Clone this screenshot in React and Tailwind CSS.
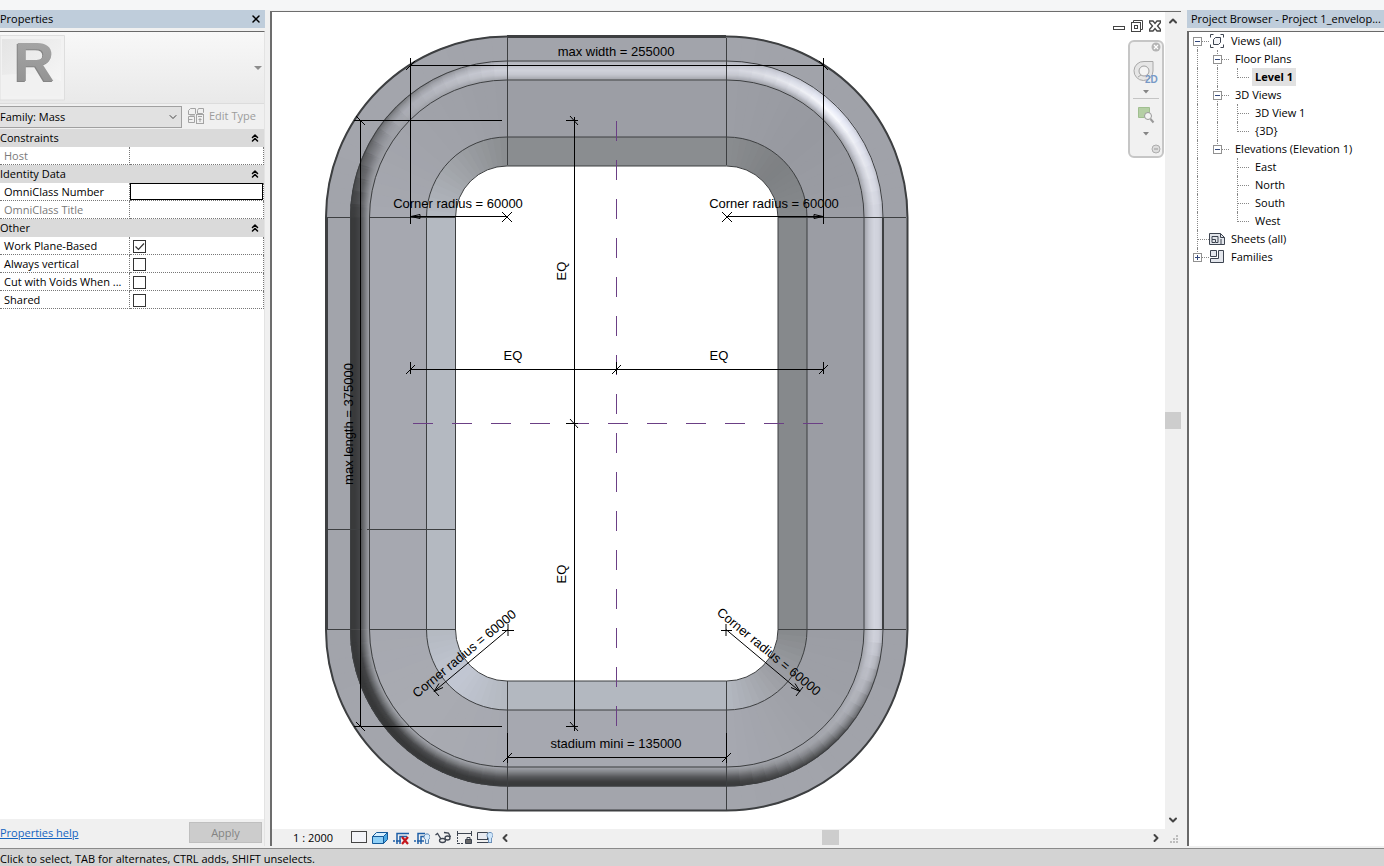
import React from "react";
import {
  ChevronDown,
  ChevronLeft,
  ChevronRight,
  ChevronUp,
  ChevronsUp,
  X,
} from "lucide-react";

/* ---------- data ---------- */

const propertyGroups = [
  {
    title: "Constraints",
    rows: [{ id: "host", label: "Host", type: "text", disabled: true }],
  },
  {
    title: "Identity Data",
    rows: [
      { id: "omni-number", label: "OmniClass Number", type: "text" },
      { id: "omni-title", label: "OmniClass Title", type: "text", disabled: true },
    ],
  },
  {
    title: "Other",
    rows: [
      { id: "work-plane", label: "Work Plane-Based", type: "check", checked: true },
      { id: "always-vertical", label: "Always vertical", type: "check" },
      { id: "cut-voids", label: "Cut with Voids When ...", type: "check" },
      { id: "shared", label: "Shared", type: "check" },
    ],
  },
];

// guides: one entry per tree column ("line", "blank", "tee", "end")
const treeRows = [
  { label: "Views (all)", guides: ["first"], toggle: "-", icon: "views" },
  { label: "Floor Plans", guides: ["line", "tee"], toggle: "-" },
  { label: "Level 1", guides: ["line", "line", "end"], selected: true },
  { label: "3D Views", guides: ["line", "tee"], toggle: "-" },
  { label: "3D View 1", guides: ["line", "line", "tee"] },
  { label: "{3D}", guides: ["line", "line", "end"] },
  { label: "Elevations (Elevation 1)", guides: ["line", "end"], toggle: "-" },
  { label: "East", guides: ["line", "blank", "tee"] },
  { label: "North", guides: ["line", "blank", "tee"] },
  { label: "South", guides: ["line", "blank", "tee"] },
  { label: "West", guides: ["line", "blank", "end"] },
  { label: "Sheets (all)", guides: ["tee"], icon: "sheets" },
  { label: "Families", guides: ["end"], toggle: "+", icon: "families" },
];

/* ---------- stadium model ---------- */

const CX = [507, 726.5];
const CY = [217.5, 629.5];

// colour stops by compass direction, E first and counter-clockwise
const TUBE = [
  [[176, 178, 187], [207, 209, 219], [211, 213, 223], [195, 197, 206], [163, 165, 172]],
  [[205, 208, 220], [232, 235, 248], [250, 251, 255], [212, 214, 224], [160, 162, 169]],
  [[168, 170, 178], [192, 194, 203], [208, 210, 219], [197, 199, 207], [163, 165, 172]],
  [[112, 114, 118], [148, 150, 156], [168, 170, 178], [168, 170, 177], [160, 162, 169]],
  [[56, 57, 58], [57, 58, 59], [66, 67, 69], [112, 114, 118], [158, 160, 166]],
  [[56, 57, 58], [56, 57, 58], [70, 71, 73], [120, 122, 126], [164, 166, 173]],
  [[56, 57, 58], [60, 61, 62], [86, 87, 90], [128, 130, 134], [162, 164, 171]],
  [[64, 65, 67], [112, 114, 118], [150, 152, 158], [168, 170, 177], [164, 166, 173]],
];
const SLOPE = [
  [[134, 137, 140]],
  [[126, 128, 131]],
  [[138, 141, 144]],
  [[160, 163, 168]],
  [[180, 185, 193]],
  [[194, 199, 211]],
  [[179, 184, 192]],
  [[158, 160, 166]],
];
const DECK = [
  [[155, 157, 164]],
  [[151, 153, 160]],
  [[156, 158, 165]],
  [[161, 163, 170]],
  [[166, 168, 176]],
  [[169, 171, 178]],
  [[166, 168, 176]],
  [[159, 161, 168]],
];
const RIM = [
  [[160, 162, 169]],
  [[160, 162, 169]],
  [[162, 164, 171]],
  [[163, 165, 172]],
  [[162, 164, 171]],
  [[163, 165, 172]],
  [[163, 165, 172]],
  [[161, 163, 170]],
];

const mix = (a, b, f) => a.map((v, i) => v + (b[i] - v) * f);

const shade = (table, deg, t) => {
  const pick = (stops) => {
    if (stops.length === 1) return stops[0];
    const p = t * (stops.length - 1);
    const i = Math.min(Math.floor(p), stops.length - 2);
    return mix(stops[i], stops[i + 1], p - i);
  };
  const k = (deg % 360) / 45;
  const i = Math.floor(k);
  const c = mix(pick(table[i]), pick(table[(i + 1) % 8]), k - i);
  return `rgb(${c.map(Math.round).join(",")})`;
};

const point = (cx, cy, r, deg) => {
  const a = (deg * Math.PI) / 180;
  return `${(cx + r * Math.cos(a)).toFixed(2)} ${(cy - r * Math.sin(a)).toFixed(2)}`;
};

const STEPS = 18;

// every segment runs a little under the next one, so no seam shows
const Ring = ({ table, outer, inner, bands = 1 }) => {
  const w = (outer - inner) / bands;
  const parts = [];
  for (let b = 0; b < bands; b++) {
    const r = outer - w * (b + 0.5);
    const t = (b + 0.5) / bands;
    const sw = w + 1;
    [
      [1, 0, 0],
      [0, 0, 90],
      [0, 1, 180],
      [1, 1, 270],
    ].forEach(([ix, iy, from]) => {
      for (let s = 0; s < STEPS; s++) {
        const d0 = from + (90 / STEPS) * s;
        const d1 = d0 + 90 / STEPS;
        parts.push(
          <path
            key={`${b}-${d0}`}
            d={`M${point(CX[ix], CY[iy], r, d0)}A${r} ${r} 0 0 0 ${point(CX[ix], CY[iy], r, d1 + 1)}`}
            stroke={shade(table, (d0 + d1) / 2, t)}
            strokeWidth={sw}
          />
        );
      }
    });
    parts.push(
      <g key={`s-${b}`} strokeWidth={sw}>
        <path d={`M${CX[1] + r} ${CY[0]}V${CY[1]}`} stroke={shade(table, 0, t)} />
        <path d={`M${CX[0]} ${CY[0] - r}H${CX[1]}`} stroke={shade(table, 90, t)} />
        <path d={`M${CX[0] - r} ${CY[0]}V${CY[1]}`} stroke={shade(table, 180, t)} />
        <path d={`M${CX[0]} ${CY[1] + r}H${CX[1]}`} stroke={shade(table, 270, t)} />
      </g>
    );
  }
  return <g fill="none">{parts}</g>;
};

const Outline = ({ r, width = 1 }) => (
  <rect
    x={CX[0] - r}
    y={CY[0] - r}
    width={CX[1] - CX[0] + 2 * r}
    height={CY[1] - CY[0] + 2 * r}
    rx={r}
    fill="none"
    stroke="#3d3f41"
    strokeWidth={width}
  />
);

const StadiumModel = () => (
  <svg viewBox="272 12 893 817" className="block h-full w-full" role="img" aria-label="Level 1 plan">
    <Ring table={RIM} outer={181} inner={156} />
    <Ring table={DECK} outer={138} inner={80} />
    <Ring table={SLOPE} outer={80} inner={52} />
    <Ring table={TUBE} outer={156.5} inner={137.5} bands={19} />
    <Outline r={181} width={2} />
    <Outline r={156.5} />
    <Outline r={137.5} />
    <Outline r={80.5} />
    <Outline r={51.5} />

    <g fill="none" stroke="#3d3f41">
      <path strokeWidth="3" d="M507 36.500H726M326.500 217V630" />
      <path d="M507.500 38V165M726.500 38V165M507.500 681V810M726.500 681V810" />
      <path d="M328 217.500H351M369 217.500H456M778 217.500H906M328 629.500H351M369 629.500H456M778 629.500H906M328 529.500H362M367 529.500H456" />
      <path strokeWidth="2" d="M883 217V630" />
    </g>

    {/* reference planes */}
    <g stroke="#6b3f85" strokeDasharray="20 19">
      <path d="M616.500 121V726" />
      <path d="M413 423.500H824" />
    </g>

    {/* dimensions */}
    <g fill="none" stroke="#000">
      <path d="M410.500 65.500H824M410.500 58V224M823.500 58V224M406 70l9 -9M819 61l9 9" />
      <path d="M360.500 120V727M354 120.500H502M354 726.500H502M356 116l9 9M356 722l9 9" />
      <path d="M574.500 117V731M566 120.500H578M566 423.500H578M566 726.500H578M570 116l8 9M570 419l8 9M570 722l8 9" />
      <path d="M410 369.500H824M410.500 362V374M616.500 362V374M823.500 362V374M406 374l9 -9M612 374l9 -9M819 374l9 -9" />
      <path d="M411 216.500H507M411 216.500l9 -2v4zM502 212l10 10M512 212l-10 10" />
      <path d="M727 216.500H823M823 216.500l-9 -2v4zM722 212l10 10M732 212l-10 10" />
      <path d="M507 757.500H727M507.500 733V763M726.500 733V763M503 762l9 -9M722 762l9 -9" />
      <path d="M508 629.500L434 691.500M434 691.500l9 -4M434 691.500l5 -8M431 687l8 9M502 630.500H514M508 624V636" />
      <path d="M726 629.500L800 691.500M800 691.500l-9 -4M800 691.500l-5 -8M803 687l-7 9M721 630.500H732M726 624V636" />
    </g>
    <g fontFamily="Liberation Sans, Arial, sans-serif" fontSize="13" textAnchor="middle" fill="#000">
      <text x="616" y="56">max width = 255000</text>
      <text x="458" y="208">Corner radius = 60000</text>
      <text x="774" y="208">Corner radius = 60000</text>
      <text x="513" y="360">EQ</text>
      <text x="719" y="360">EQ</text>
      <text x="616" y="748">stadium mini = 135000</text>
      <text transform="translate(353 424) rotate(-90)">max length = 375000</text>
      <text transform="translate(566 271) rotate(-90)">EQ</text>
      <text transform="translate(566 574) rotate(-90)">EQ</text>
      <text transform="translate(467 657) rotate(-39.500)">Corner radius = 60000</text>
      <text transform="translate(766 655) rotate(39.500)">Corner radius = 60000</text>
    </g>
  </svg>
);

/* ---------- properties palette ---------- */

const RevitLogo = () => (
  <svg viewBox="0 0 66 66" className="h-[66px] w-[66px] overflow-visible" aria-hidden="true">
    <defs>
      <linearGradient id="tile" x1="0" y1="0" x2="1" y2="1">
        <stop offset="0" stopColor="#e4e4e4" />
        <stop offset="1" stopColor="#f8f8f8" />
      </linearGradient>
      <linearGradient id="logo" x1="0" y1="0" x2="0" y2="1">
        <stop offset="0" stopColor="#a9a9a9" />
        <stop offset="1" stopColor="#8f8f8f" />
      </linearGradient>
    </defs>
    <path d="M0 .5H64.500V65H0z" fill="#f2f2f2" stroke="#dedede" />
    <path d="M2 4H61V61H2z" fill="url(#tile)" />
    <path d="M2 40C22 38 44 38 61 46V61H2z" fill="#f1f1f1" />
    <g fontFamily="Liberation Sans, Arial, sans-serif" fontWeight="700" fontSize="56">
      <text x="13" y="47" fill="#858585">R</text>
      <text x="14" y="46" fill="url(#logo)">R</text>
    </g>
  </svg>
);

const EditTypeIcon = () => (
  <svg viewBox="0 0 17 17" className="h-[17px] w-[17px]" fill="none" stroke="#a3a3a3" aria-hidden="true">
    <path d="M.5 3.500l2-2h5v5l-1 1h-6zM9.500 3.500l1-2h5v4l-1 1h-5zM.5 9.500h6v6h-6zM.5 12.500h4M2 8h5" />
    <rect x="8.500" y="7.500" width="7" height="9" fill="#f0f0f0" />
    <path d="M10 9.500h4M10.500 12.500h3M12 11v4" />
  </svg>
);

const CheckBox = ({ id, defaultChecked }) => (
  <span className="relative ml-[3px] mt-0.5 block h-[13px] w-[13px]">
    <input
      id={id}
      type="checkbox"
      defaultChecked={defaultChecked}
      className="peer block h-[13px] w-[13px] appearance-none border border-[#333] bg-white"
    />
    <svg
      viewBox="0 0 13 13"
      className="pointer-events-none absolute inset-0 hidden peer-checked:block"
      fill="none"
      stroke="#333"
      strokeWidth="1.200"
    >
      <path d="M2.500 6.500l3 3 5.500-6" />
    </svg>
  </span>
);

const PropertyTable = () => (
  <table className="w-full table-fixed border-separate border-spacing-0">
    <colgroup>
      <col className="w-[130px]" />
      <col />
    </colgroup>
    {propertyGroups.map((group) => (
      <tbody key={group.title}>
        <tr>
          <th colSpan={2} className="h-[18px] bg-[#dadada] p-0 text-left font-normal">
            <span className="flex items-center justify-between pr-[3px]">
              {group.title}
              <ChevronsUp size={12} strokeWidth={3} />
            </span>
          </th>
        </tr>
        {group.rows.map((row) => (
          <tr key={row.id} className={row.disabled ? "text-[#7a7a7a]" : "text-black"}>
            <td className="h-[18px] border-r border-b border-dotted border-[#777] p-0 pl-1">
              <label htmlFor={row.id} className="block h-[17px] leading-[17px] whitespace-nowrap">
                {row.label}
              </label>
            </td>
            <td className="h-[18px] border-r border-b border-dotted border-[#777] p-0">
              {row.type === "check" ? (
                <CheckBox id={row.id} defaultChecked={row.checked} />
              ) : (
                <input
                  id={row.id}
                  type="text"
                  disabled={row.disabled}
                  className="block h-[17px] w-full border border-black bg-white px-1 outline-none disabled:border-transparent"
                />
              )}
            </td>
          </tr>
        ))}
      </tbody>
    ))}
  </table>
);

const PropertiesPanel = () => (
  <aside className="flex w-[265px] shrink-0 flex-col">
    <header className="flex h-[18px] items-center justify-between bg-[#bfcddb] pr-[3px]">
      <h2>Properties</h2>
      <button type="button" aria-label="Close properties">
        <X size={12} strokeWidth={3} />
      </button>
    </header>
    <div className="mt-[3px] flex min-h-0 flex-1 flex-col border-t border-r border-t-[#696969] border-r-[#e3e3e3]">
      <div className="flex h-[72px] items-center justify-between border-b border-[#dcdcdc] bg-linear-to-b from-[#f8f8f8] to-[#e9e9e9] pr-0.5">
        <RevitLogo />
        <button type="button" aria-label="Type selector">
          <svg viewBox="0 0 8 4" className="h-1 w-2">
            <path d="M0 0h8l-4 4z" fill="#8d8d8d" />
          </svg>
        </button>
      </div>
      <div className="flex h-[25px] items-center">
        <div className="relative">
          <select
            aria-label="Family"
            className="block h-[22px] w-[182px] appearance-none border border-l-0 border-[#a0a0a0] bg-[#e1e1e1]"
          >
            <option>Family: Mass</option>
          </select>
          <ChevronDown size={12} className="pointer-events-none absolute top-[5px] right-[3px] text-[#444]" />
        </div>
        <button type="button" disabled className="ml-1.5 flex items-center gap-1 pb-0.5 text-[#9c9c9c]">
          <EditTypeIcon />
          Edit Type
        </button>
      </div>
      <div className="flex-1 bg-white">
        <PropertyTable />
      </div>
      <footer className="flex h-[27px] items-center justify-between pr-0.5">
        <a href="#help" className="text-[#1464c0] underline">
          Properties help
        </a>
        <button
          type="button"
          disabled
          className="h-[21px] w-[73px] border border-[#bfbfbf] bg-[#ccc] text-[#838383]"
        >
          Apply
        </button>
      </footer>
    </div>
  </aside>
);

/* ---------- drawing view ---------- */

const WindowControls = () => (
  <div className="absolute top-2 right-1 flex items-center gap-1.5 text-[#444]">
    <button type="button" aria-label="Minimize">
      <svg viewBox="0 0 12 12" className="h-3 w-3" fill="#fff" stroke="currentColor">
        <rect x=".5" y="6.500" width="11" height="3" />
      </svg>
    </button>
    <button type="button" aria-label="Restore">
      <svg viewBox="0 0 12 12" className="h-3 w-3" fill="none" stroke="currentColor">
        <path d="M2.500 2V.5h9v9H10" />
        <rect x=".5" y="2.500" width="9" height="9" />
        <rect x="3.500" y="5.500" width="3" height="3" />
      </svg>
    </button>
    <button type="button" aria-label="Close view">
      <svg viewBox="0 0 12 12" className="h-3 w-3" fill="#fff" stroke="currentColor" strokeWidth="1.300">
        <path d="M.5 1h3.500l2 2.500L8 1h3.500v1.500L8.500 6l3 3.500V11H8L6 8.500 4 11H.5V9.500l3-3.500-3-3.500z" />
      </svg>
    </button>
  </div>
);

const NavigationBar = () => (
  <div className="absolute top-7 right-px flex h-[118px] w-9 flex-col items-center rounded-md border-2 border-[#c6c6c6] bg-[#f1f1f1]">
    <button type="button" aria-label="Close navigation bar" className="mr-px self-end">
      <svg viewBox="0 0 10 10" className="h-[10px] w-[10px]">
        <circle cx="5" cy="5" r="4.500" fill="#b5b5b5" />
        <path d="M3 3l4 4M7 3l-4 4" stroke="#fff" strokeWidth="1.200" />
      </svg>
    </button>
    <button type="button" aria-label="Steering wheel" className="mt-2">
      <svg viewBox="0 0 26 26" className="h-[26px] w-[26px] overflow-visible" fill="none">
        <path d="M11 1.500h9v9.500a9.500 9.500 0 1 1-9-9.500z" fill="#e6e6e6" stroke="#a8a8a8" />
        <circle cx="11" cy="11" r="5" fill="#f4f4f4" stroke="#a0a0a0" />
        <path d="M5 17l3-2M14 14l3 3" stroke="#a8a8a8" />
        <text x="12" y="23" fontFamily="Liberation Sans, Arial, sans-serif" fontWeight="700" fontSize="10" fill="#7799c6">
          2D
        </text>
      </svg>
    </button>
    <svg viewBox="0 0 6 4" className="mt-1 h-1 w-1.5">
      <path d="M0 0h6L3 3.500z" fill="#858585" />
    </svg>
    <hr className="mt-1 w-[26px] border-[#c4c4c4]" />
    <button type="button" aria-label="Zoom" className="mt-[7px]">
      <svg viewBox="0 0 18 18" className="h-[18px] w-[18px]" fill="none">
        <path d="M1.500 1.500h11v10h-11z" fill="#b5cfa5" stroke="#a0bf90" />
        <circle cx="11" cy="10" r="3.500" fill="#f4f4f4" stroke="#9a9a9a" />
        <path d="M13.500 13l3 3.500" stroke="#9a9a9a" strokeWidth="2" />
      </svg>
    </button>
    <svg viewBox="0 0 6 4" className="mt-2 h-1 w-1.5">
      <path d="M0 0h6L3 3.500z" fill="#858585" />
    </svg>
    <svg viewBox="0 0 10 10" className="mt-auto mr-px mb-0.5 h-[10px] w-[10px] self-end">
      <circle cx="5" cy="5" r="4" fill="#ddd" stroke="#adadad" />
      <path d="M3 5h4" stroke="#999" />
    </svg>
  </div>
);

const viewTools = [
  {
    name: "Detail level",
    art: <rect x=".5" y="1.500" width="15" height="11" fill="#f3f4f8" stroke="#444" />,
  },
  {
    name: "Visual style",
    art: (
      <>
        <path d="M.5 6.500l4-4h11l-4 4z" fill="#d5efff" stroke="#155a99" />
        <path d="M.5 6.500h11v7H.5z" fill="#8fd0f7" stroke="#155a99" />
        <path d="M11.500 6.500l4-4v7l-4 4z" fill="#4ca9e4" stroke="#155a99" />
      </>
    ),
  },
  {
    name: "Crop view off",
    art: (
      <>
        <path d="M0 11h2M4 14V3.500H16M7 14V6.500H14M3 11h5" stroke="#1f5fa6" strokeWidth="1.500" />
        <path d="M9 7l6 7M15 7l-6 7" stroke="#c4161c" strokeWidth="2.200" />
      </>
    ),
  },
  {
    name: "Show crop region",
    art: (
      <>
        <path d="M0 11h2M4 14V3.500H11M7 14V6.500H10M3 11h7" stroke="#1f5fa6" strokeWidth="1.500" />
        <path d="M11.500 9.500a3 3 0 1 1 3 0v4h-3z" fill="#d9ecfb" stroke="#5a86b5" />
      </>
    ),
  },
  {
    name: "Temporary hide",
    art: (
      <g stroke="#3d4450" strokeWidth="1.300">
        <path d="M.5 5l2-1.500L6 9M9 2.500L13.500 3l2 4" />
        <ellipse cx="7.500" cy="10.500" rx="3" ry="2" />
        <ellipse cx="12.500" cy="8" rx="2.500" ry="2" />
      </g>
    ),
  },
  {
    name: "Temporary view properties",
    art: (
      <g stroke="#3d4450">
        <path d="M1.500 1v5M15.500 1v5M1 3.500h15" />
        <path d="M1.500 7v7M2 13.500h6" strokeDasharray="2 1" />
        <path d="M9.500 9.500h6v4h-6z" fill="#666" />
        <path d="M11 9V7.500h3V9" />
      </g>
    ),
  },
  {
    name: "Reveal hidden",
    art: (
      <>
        <path d="M.5 2.500h10v7H.5z" fill="#e8eaf0" stroke="#3d4450" />
        <path d="M0 9.500h11M0 12.500h15" stroke="#3d4450" />
        <path d="M11.500 8a3 3 0 1 1 3 0v4.500h-3z" fill="#cfe6fa" stroke="#6d93bd" />
      </>
    ),
  },
];

const ViewControlBar = () => (
  <div className="flex h-[17px] items-center bg-[#f0f0f0] pl-[21px]">
    <button type="button" className="mr-[18px] whitespace-nowrap">
      1 : 2000
    </button>
    <div className="flex gap-[5px]">
      {viewTools.map((tool) => (
        <button key={tool.name} type="button" aria-label={tool.name}>
          <svg viewBox="0 0 16 16" className="h-4 w-4" fill="none">
            {tool.art}
          </svg>
        </button>
      ))}
    </div>
    <button type="button" aria-label="Scroll left" className="ml-1.5 text-[#444]">
      <ChevronLeft size={12} strokeWidth={4} />
    </button>
    <div className="flex h-full flex-1 items-center justify-center">
      <span className="h-[15px] w-[17px] bg-[#cdcdcd]" />
    </div>
    <button type="button" aria-label="Scroll right" className="mr-[3px] text-[#444]">
      <ChevronRight size={12} strokeWidth={4} />
    </button>
  </div>
);

const DrawingView = () => (
  <main className="mt-px ml-[5px] flex min-w-0 flex-1 border-t border-l-2 border-[#6d6d6d] bg-white">
    <div className="flex min-w-0 flex-1 flex-col">
      <div className="relative min-h-0 flex-1">
        <StadiumModel />
        <WindowControls />
        <NavigationBar />
      </div>
      <ViewControlBar />
    </div>
    <div className="flex w-4 shrink-0 flex-col items-center bg-[#f0f0f0] text-[#444]">
      <button type="button" aria-label="Scroll up" className="mt-[3px]">
        <ChevronUp size={12} strokeWidth={4} />
      </button>
      <div className="flex w-full flex-1 flex-col justify-center">
        <span className="h-[17px] w-full bg-[#cdcdcd]" />
      </div>
      <button type="button" aria-label="Scroll down" className="mb-[3px]">
        <ChevronDown size={12} strokeWidth={4} />
      </button>
      <svg viewBox="0 0 16 17" className="h-[17px] w-4" fill="#bdbdbd" aria-hidden="true">
        <path d="M11 6h2v2h-2zM8 9h2v2H8zM11 9h2v2h-2zM5 12h2v2H5zM8 12h2v2H8zM11 12h2v2h-2z" />
      </svg>
    </div>
  </main>
);

/* ---------- project browser ---------- */

const treeIcons = {
  views: (
    <>
      <path d="M1.500 4.500v-3h3M11.500 1.500h3v3M14.500 11.500v3h-3M4.500 14.500h-3v-3" />
      <path d="M4.500 6.500l2-2h5v5l-2 2h-5z" fill="#f4f5f8" />
    </>
  ),
  sheets: (
    <>
      <path d="M.5 2.500h11l4 4v7H.5z" fill="#e3e6ec" />
      <path d="M11.500 2.500v4h4M3 5.500h6v6H6.500v-3H3zM3 8.500v3h3M12 8v5" />
    </>
  ),
  families: <path d="M1.500 1.500h6v6h-6zM9.500 1.500h5v12h-13v-4h8z" fill="#e3e6ec" />,
};

const Guide = ({ kind, toggle }) => (
  <span className="relative block h-[18px] w-5 shrink-0 pl-2">
    {(kind === "line" || kind === "tee") && (
      <span className="block h-full border-l border-dotted border-[#888]">
        {kind === "tee" && <span className="block h-[10px] border-b border-dotted border-[#888]" />}
      </span>
    )}
    {kind === "end" && <span className="block h-[10px] border-b border-l border-dotted border-[#888]" />}
    {kind === "first" && (
      <span className="block h-full pt-[9px]">
        <span className="block h-[9px] border-t border-l border-dotted border-[#888]" />
      </span>
    )}
    {toggle && (
      <button
        type="button"
        aria-label={toggle === "-" ? "Collapse" : "Expand"}
        className="absolute top-[5px] left-1 h-[9px] w-[9px] bg-white"
      >
        <svg viewBox="0 0 9 9" className="block h-[9px] w-[9px]" fill="#fff">
          <rect x=".5" y=".5" width="8" height="8" stroke="#919191" />
          <path d={toggle === "-" ? "M2 4.500h5" : "M2 4.500h5M4.500 2v5"} stroke="#33487c" />
        </svg>
      </button>
    )}
  </span>
);

const ProjectBrowser = () => (
  <aside className="ml-1.5 flex w-[197px] shrink-0 flex-col">
    <header className="h-[18px] bg-[#bfcddb] pl-1">
      <h2 className="whitespace-nowrap">Project Browser - Project 1_envelop...</h2>
    </header>
    <ul className="mt-[3px] flex-1 border-t border-l-2 border-[#696969] bg-white">
      {treeRows.map((row) => (
        <li key={row.label} className="flex h-[18px] items-center">
          {row.guides.map((kind, i) => (
            <Guide key={i} kind={kind} toggle={i === row.guides.length - 1 ? row.toggle : undefined} />
          ))}
          {row.icon && (
            <svg viewBox="0 0 16 16" className="h-4 w-4 shrink-0" fill="none" stroke="#3d4450">
              {treeIcons[row.icon]}
            </svg>
          )}
          <a
            href="#view"
            className={
              row.selected
                ? "ml-[3px] bg-[#e1e1e1] px-[3px] font-bold"
                : "ml-1.5 whitespace-nowrap"
            }
          >
            {row.label}
          </a>
        </li>
      ))}
    </ul>
  </aside>
);

const App = () => {
  return (
    <div className="flex h-screen flex-col overflow-hidden bg-[#f0f0f0] font-['Open_Sans',sans-serif] text-[11px] leading-[18px] text-black">
      <div className="h-[10px] shrink-0 bg-[#f5f6f7]" />
      <div className="flex min-h-0 flex-1 pb-0.5">
        <PropertiesPanel />
        <DrawingView />
        <ProjectBrowser />
      </div>
      <footer className="h-[18px] shrink-0 border-t border-[#8a8a8a] bg-[#d3d3d3] whitespace-nowrap">
        <p className="pt-0.5 leading-[15px]">
          Click to select, TAB for alternates, CTRL adds, SHIFT unselects.
        </p>
      </footer>
    </div>
  );
};

export default App;
